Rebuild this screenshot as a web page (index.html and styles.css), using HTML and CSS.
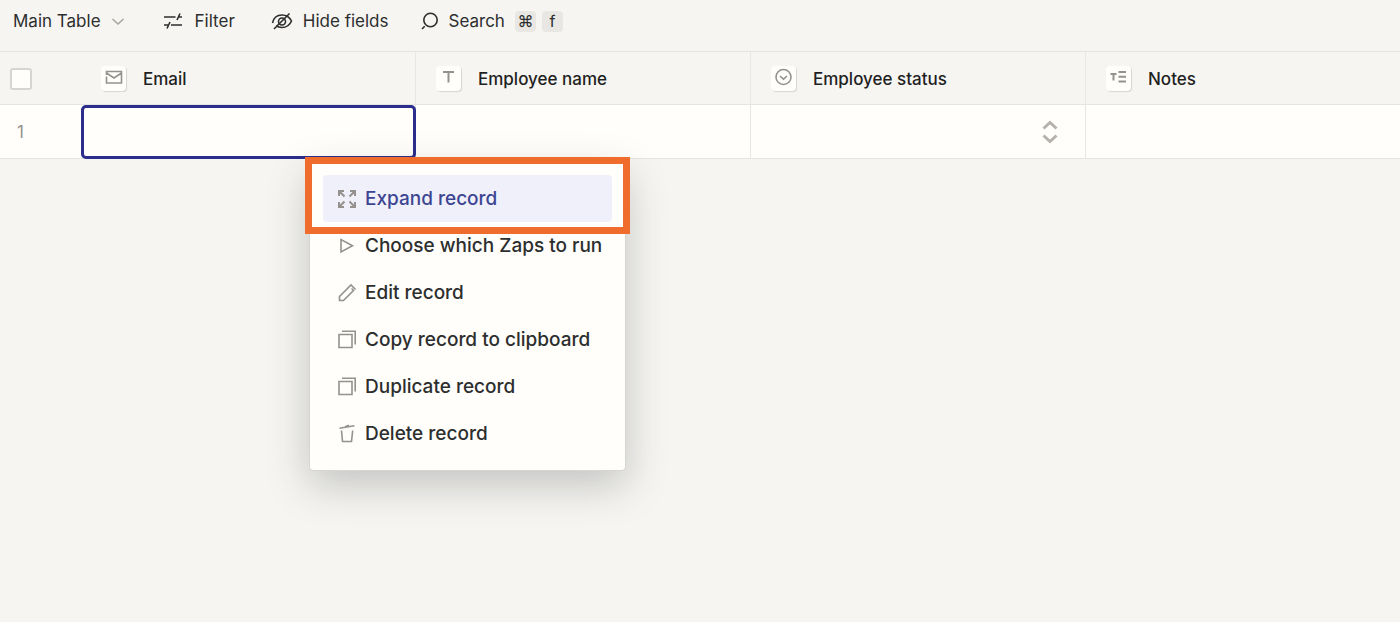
FILE: index.html
```html
<!DOCTYPE html>
<html lang="en">
<head>
    <meta charset="UTF-8">
    <meta name="viewport" content="width=device-width, initial-scale=1.0">
    <title>Main Table</title>
    <link rel="stylesheet" href="styles.css">
</head>
<body>

<!-- Toolbar -->
<header class="toolbar">
    <button type="button" class="tool tool-view">
        Main Table
        <svg class="chevron" width="14" height="14" viewBox="0 0 14 14"><path d="M1.500 5l5.500 5 5.500-5"/></svg>
    </button>
    <button type="button" class="tool tool-filter">
        <svg width="20" height="20" viewBox="0 0 20 20"><path d="M1 6h11.500M15 6h4M17 2.500l-3 6.500M19 14H8M5 14H1M7 11l-3 6.500"/></svg>
        Filter
    </button>
    <button type="button" class="tool tool-hide">
        <svg width="22" height="20" viewBox="0 0 22 20"><path d="M1.500 12C2.500 7 6 4 11 4c4.500 0 8 3 9.500 6-1.500 3.500-5 6.500-9.500 6.500-2.500 0-4.500-.7-6-1.800M18.500 2.500L3 18"/><circle cx="11" cy="10.500" r="3.500"/></svg>
        Hide fields
    </button>
    <button type="button" class="tool tool-search">
        <svg width="20" height="20" viewBox="0 0 20 20"><circle cx="10.500" cy="9" r="6.700"/><path d="M4.700 15.200l-2.700 2.800"/></svg>
        Search
        <span class="keys"><kbd>⌘</kbd><kbd>f</kbd></span>
    </button>
</header>

<!-- Records -->
<table class="records">
    <thead>
        <tr>
            <th class="col-index"><input type="checkbox" aria-label="Select all records"></th>
            <th class="col-email">
                <div class="field">
                    <span class="field-icon"><svg width="18" height="18" viewBox="0 0 18 18"><path d="M1.500 7V3.500h15v11.500h-15V8.500M1.500 5L9 10l7.500-5"/></svg></span>
                    Email
                </div>
            </th>
            <th class="col-field">
                <div class="field">
                    <span class="field-icon"><svg width="18" height="18" viewBox="0 0 18 18"><path class="bold" d="M3 4h11M8.500 4V14.500"/></svg></span>
                    Employee name
                </div>
            </th>
            <th class="col-field">
                <div class="field">
                    <span class="field-icon"><svg width="18" height="18" viewBox="0 0 18 18"><circle cx="8.500" cy="9" r="7.500"/><path d="M5 8l3.500 3.200L12 8"/></svg></span>
                    Employee status
                </div>
            </th>
            <th>
                <div class="field">
                    <span class="field-icon"><svg width="18" height="18" viewBox="0 0 18 18"><path class="bold" d="M.5 6h6M3.500 6v6.500M8.500 4H16M8.500 8.700H16M8.500 13.500H16"/></svg></span>
                    Notes
                </div>
            </th>
        </tr>
    </thead>
    <tbody>
        <tr>
            <td class="col-index">1</td>
            <td class="selected">
                <input type="text" class="cell-input" aria-label="Email">

                <!-- Row context menu -->
                <div class="menu" role="menu">
                    <button type="button" role="menuitem" class="menu-item active">
                        <svg width="20" height="20" viewBox="0 0 20 20"><path class="bold" d="M2 7V2h5M2 2l5.500 5.500M13 2h5v5M18 2l-5.500 5.500M2 13v5h5M2 18l5.500-5.500M13 18h5v-5M18 18l-5.500-5.500"/></svg>
                        Expand record
                    </button>
                    <button type="button" role="menuitem" class="menu-item">
                        <svg width="20" height="20" viewBox="0 0 20 20"><path d="M4 3.500v12.500L15.500 9.700z"/></svg>
                        Choose which Zaps to run
                    </button>
                    <button type="button" role="menuitem" class="menu-item">
                        <svg width="20" height="20" viewBox="0 0 20 20"><path d="M18.500 6.500L14 2 2.500 13.500v4h4L16.500 7.500l-2-2"/></svg>
                        Edit record
                    </button>
                    <button type="button" role="menuitem" class="menu-item">
                        <svg width="20" height="20" viewBox="0 0 20 20"><path d="M2 4.500h13v13H2zM5 1.300h13.200v13.200"/></svg>
                        Copy record to clipboard
                    </button>
                    <button type="button" role="menuitem" class="menu-item">
                        <svg width="20" height="20" viewBox="0 0 20 20"><path d="M2 4.500h13v13H2zM5 1.300h13.200v13.200"/></svg>
                        Duplicate record
                    </button>
                    <button type="button" role="menuitem" class="menu-item">
                        <svg width="20" height="20" viewBox="0 0 20 20"><path d="M4.500 6.500l1 11h9l1.200-11M2.500 4.200l15-2.500M8 2.800l4-1.500"/></svg>
                        Delete record
                    </button>
                    <span class="callout"></span>
                </div>
            </td>
            <td></td>
            <td>
                <button type="button" class="status-toggle" aria-label="Choose employee status">
                    <svg width="16" height="24" viewBox="0 0 16 24"><path d="M1.500 8.500L8 2.500l6.500 6M1.500 15.500L8 21.500l6.500-6"/></svg>
                </button>
            </td>
            <td></td>
        </tr>
    </tbody>
</table>

</body>
</html>
```
FILE: styles.css
```css
* {
    box-sizing: border-box;
}

body {
    margin: 0;
    min-height: 100vh;
    background-color: #f6f5f2;
    color: #2d2e2e;
    font-family: Inter, "Liberation Sans", sans-serif;
    font-size: 17px;
}

button {
    border: none;
    background: none;
    color: inherit;
    font: inherit;
    cursor: pointer;
}

svg {
    flex-shrink: 0;
    fill: none;
    stroke: currentColor;
    stroke-width: 1.6;
}

svg .bold {
    stroke-width: 2;
}

/* Toolbar */
.toolbar {
    display: flex;
    align-items: center;
    gap: 32px;
    height: 51px;
    padding: 0 13px 9px;
}

.tool {
    display: flex;
    align-items: center;
    gap: 10px;
    padding: 0;
    white-space: nowrap;
}

.tool-view {
    margin-right: 6px;
}

.tool-filter {
    gap: 12px;
}

.tool-hide {
    margin-left: 4px;
}

.tool-search {
    gap: 8px;
}

.chevron {
    color: #a8a5a0;
}

.keys {
    display: flex;
    gap: 6px;
    margin-left: 2px;
}

kbd {
    width: 21px;
    height: 21px;
    border-radius: 4px;
    background-color: #e8e7e4;
    font-family: inherit;
    font-size: 16px;
    line-height: 21px;
    text-align: center;
}

/* Records table */
.records {
    width: 100%;
    table-layout: fixed;
    border-collapse: separate;
    border-spacing: 0;
    border-top: 1px solid #e5e4e1;
}

.records th,
.records td {
    height: 53px;
    padding: 0;
    border-right: 1px solid #e8e7e4;
    border-bottom: 1px solid #e5e4e1;
    text-align: left;
}

.records th {
    padding-top: 1px;
    color: #1f1f1f;
    font-weight: 500;
}

.records td {
    height: 54px;
    background-color: #fffefb;
}

.records th:last-child,
.records td:last-child,
.records .col-index {
    border-right: none;
}

.col-index {
    width: 82px;
}

.records td.col-index {
    padding-left: 17px;
    color: #95928e;
}

.col-email {
    width: 334px;
}

.col-field {
    width: 335px;
}

.col-index input {
    display: block;
    appearance: none;
    width: 22px;
    height: 22px;
    margin: 0 0 0 10px;
    border: 2px solid #d7d5d2;
    border-radius: 3px;
    background-color: #fffefb;
}

.field {
    display: flex;
    align-items: center;
    gap: 17px;
    padding-left: 20px;
}

.col-email .field {
    padding-left: 19px;
}

.field-icon {
    display: flex;
    justify-content: center;
    width: 25px;
    height: 25px;
    padding-top: 2px;
    border-radius: 4px;
    background-color: #fffefb;
    box-shadow: 1px 1px 1px #d7d5d2;
    color: #95928e;
}

/* Selected cell */
.records .selected {
    position: relative;
    padding-top: 1px;
}

.cell-input {
    display: block;
    width: 100%;
    height: 52px;
    padding: 0 16px;
    border: none;
    border-radius: 4px;
    outline: 3px solid #2b2e8c;
    outline-offset: -2px;
    background-color: #fffefb;
    font: inherit;
}

.status-toggle {
    display: flex;
    margin-left: auto;
    margin-right: 27px;
    padding: 0;
    color: #b5b2ae;
}

.status-toggle svg {
    stroke-width: 3;
}

/* Context menu */
.menu {
    position: absolute;
    top: 56px;
    left: 227px;
    z-index: 1;
    width: 317px;
    padding: 13px;
    border: 1px solid #d7d5d2;
    border-radius: 4px;
    background-color: #fffefb;
    box-shadow: 0 14px 40px rgba(45, 46, 46, 0.25);
}

.menu-item {
    display: flex;
    align-items: center;
    gap: 8px;
    width: 100%;
    height: 47px;
    padding: 0 14px;
    border-radius: 4px;
    font-size: 19px;
    font-weight: 500;
    white-space: nowrap;
}

.menu-item svg {
    color: #95928e;
}

.menu-item.active {
    background-color: #f0f0fa;
    color: #3d4592;
}

.callout {
    position: absolute;
    top: -5px;
    left: -5px;
    right: -5px;
    height: 77px;
    border: 7px solid #f06c2c;
    pointer-events: none;
}
```
